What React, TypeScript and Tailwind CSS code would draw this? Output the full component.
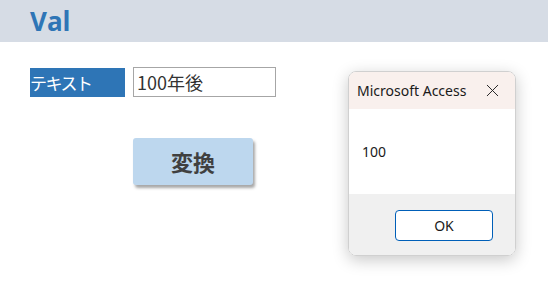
import { X } from "lucide-react";

export default function App() {
  return (
    <div className="relative h-[294px] w-[548px] overflow-hidden bg-white font-['Noto_Sans','Noto_Sans_CJK_JP',sans-serif]">
      <header className="flex h-[42px] items-center bg-[#d6dce5] pl-[30px]">
        <h1 className="text-[26px] leading-none font-bold text-[#2e75b6] font-['Open_Sans',sans-serif]">Val</h1>
      </header>

      <div className="pl-[30px] pt-[25px]">
        <div className="flex items-center gap-[8px]">
          <div className="flex h-[29px] w-[95px] items-center bg-[#2e75b6] text-[17px] leading-none tracking-[-1.5px] text-white font-['Noto_Sans_CJK_JP',sans-serif]">
            テキスト
          </div>
          <div className="flex h-[30px] w-[143px] items-center border border-[#a6a6a6] pl-[3px] text-[18px] leading-none text-[#333] font-['Noto_Sans_CJK_JP',sans-serif]">
            100年後
          </div>
        </div>

        <button className="ml-[103px] mt-[41px] flex h-[47px] w-[120px] items-center justify-center rounded-[3px] bg-[#bdd7ee] text-[22px] font-bold text-[#404040] shadow-[2px_3px_3px_rgba(0,0,0,0.35)] font-['Noto_Sans_CJK_JP',sans-serif]">
          変換
        </button>
      </div>

      <div className="absolute left-[348px] top-[71px] flex h-[185px] w-[168px] flex-col overflow-hidden rounded-[8px] border border-[#d0d0d0] shadow-[0_4px_16px_rgba(0,0,0,0.22)] font-['Noto_Sans',sans-serif]">
        <div className="flex h-[37px] items-center justify-between bg-[#f9f0ed] pl-[8px] pr-[12px]">
          <span className="text-[14px] text-[#1a1a1a]">Microsoft Access</span>
          <X size={21} strokeWidth={1.1} className="text-[#222]" />
        </div>
        <div className="flex h-[85px] items-center bg-white pl-[13px] text-[14px] text-[#1a1a1a]">100</div>
        <div className="flex flex-1 items-start justify-end bg-[#f0f0f0] pr-[22px] pt-[16px]">
          <button className="flex h-[31px] w-[98px] items-center justify-center rounded-[4px] border border-[#005fb8] bg-white text-[14px] text-[#1a1a1a]">
            OK
          </button>
        </div>
      </div>
    </div>
  );
}
